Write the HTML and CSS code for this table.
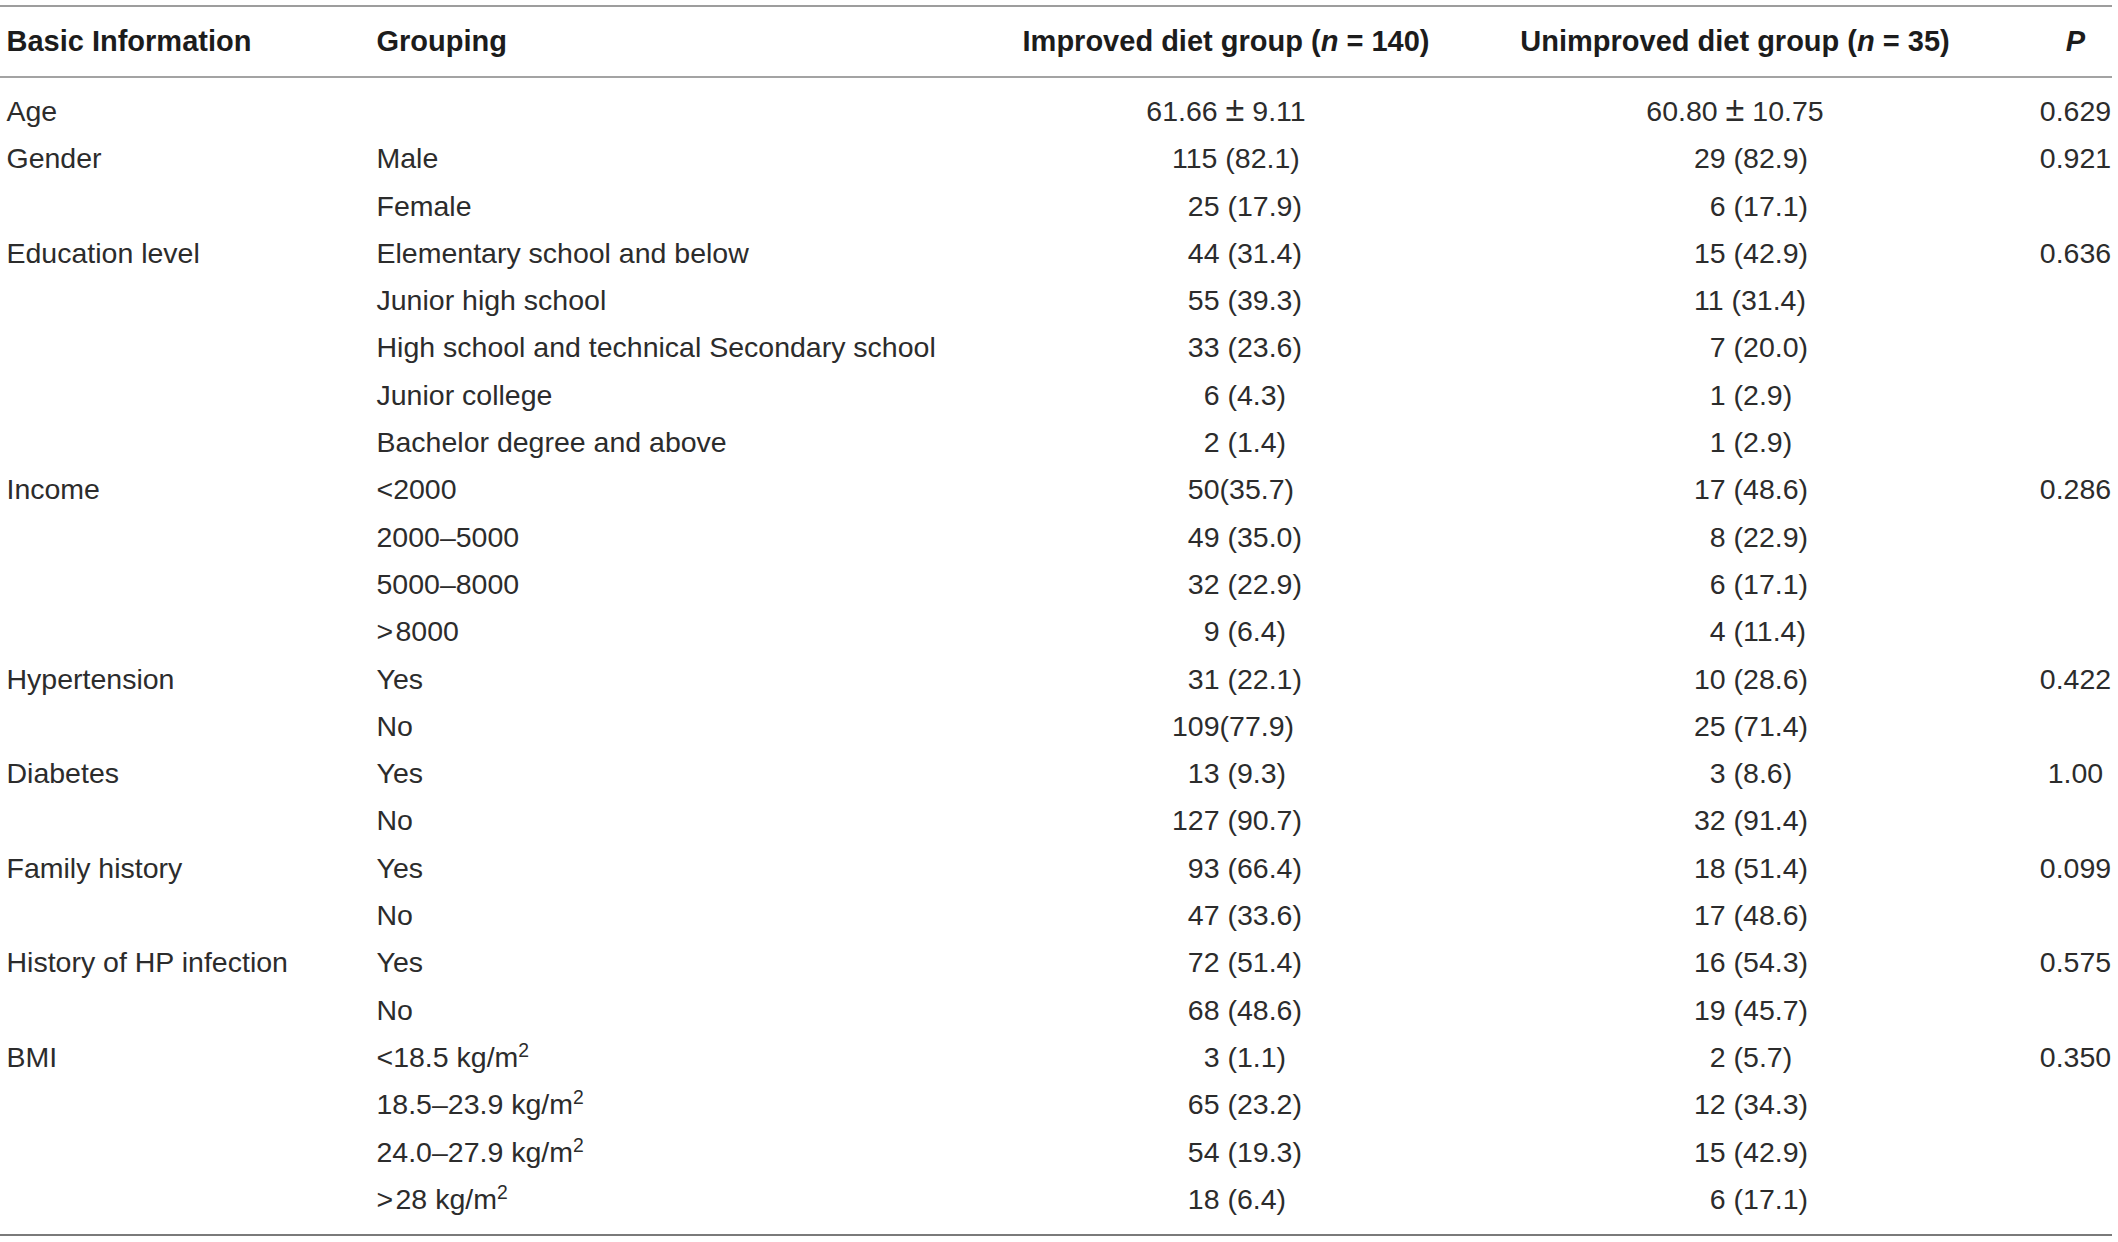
FILE: index.html
```html
<!DOCTYPE html>
<html lang="en">
<head>
<meta charset="utf-8">
<title>Basic information of patients</title>
<link rel="stylesheet" href="styles.css">
</head>
<body>
<div class="page">
<table class="tbl">
  <colgroup>
    <col class="w1"><col class="w2"><col class="w3"><col class="w4"><col class="w5">
  </colgroup>
  <thead>
    <tr>
      <th class="c1">Basic Information</th>
      <th class="c2">Grouping</th>
      <th class="ctr">Improved diet group (<i>n</i> = 140)</th>
      <th class="ctr">Unimproved diet group (<i>n</i> = 35)</th>
      <th class="cp"><i>P</i></th>
    </tr>
  </thead>
  <tbody>
    <tr><td class="c1">Age</td><td class="c2"></td><td class="ctr">61.66 <span class="pm">±</span> 9.11</td><td class="ctr">60.80 <span class="pm">±</span> 10.75</td><td class="cp">0.629</td></tr>
    <tr><td class="c1">Gender</td><td class="c2">Male</td><td class="a3">115 (82.1)</td><td class="b2">29 (82.9)</td><td class="cp">0.921</td></tr>
    <tr><td class="c1"></td><td class="c2">Female</td><td class="a2">25 (17.9)</td><td class="b1">6 (17.1)</td><td class="cp"></td></tr>
    <tr><td class="c1">Education level</td><td class="c2">Elementary school and below</td><td class="a2">44 (31.4)</td><td class="b2">15 (42.9)</td><td class="cp">0.636</td></tr>
    <tr><td class="c1"></td><td class="c2">Junior high school</td><td class="a2">55 (39.3)</td><td class="b2">11 (31.4)</td><td class="cp"></td></tr>
    <tr><td class="c1"></td><td class="c2">High school and technical Secondary school</td><td class="a2">33 (23.6)</td><td class="b1">7 (20.0)</td><td class="cp"></td></tr>
    <tr><td class="c1"></td><td class="c2">Junior college</td><td class="a1">6 (4.3)</td><td class="b1">1 (2.9)</td><td class="cp"></td></tr>
    <tr><td class="c1"></td><td class="c2">Bachelor degree and above</td><td class="a1">2 (1.4)</td><td class="b1">1 (2.9)</td><td class="cp"></td></tr>
    <tr><td class="c1">Income</td><td class="c2">&lt;2000</td><td class="a2">50(35.7)</td><td class="b2">17 (48.6)</td><td class="cp">0.286</td></tr>
    <tr><td class="c1"></td><td class="c2">2000–5000</td><td class="a2">49 (35.0)</td><td class="b1">8 (22.9)</td><td class="cp"></td></tr>
    <tr><td class="c1"></td><td class="c2">5000–8000</td><td class="a2">32 (22.9)</td><td class="b1">6 (17.1)</td><td class="cp"></td></tr>
    <tr><td class="c1"></td><td class="c2">&gt;&#8202;8000</td><td class="a1">9 (6.4)</td><td class="b1">4 (11.4)</td><td class="cp"></td></tr>
    <tr><td class="c1">Hypertension</td><td class="c2">Yes</td><td class="a2">31 (22.1)</td><td class="b2">10 (28.6)</td><td class="cp">0.422</td></tr>
    <tr><td class="c1"></td><td class="c2">No</td><td class="a3">109(77.9)</td><td class="b2">25 (71.4)</td><td class="cp"></td></tr>
    <tr><td class="c1">Diabetes</td><td class="c2">Yes</td><td class="a2">13 (9.3)</td><td class="b1">3 (8.6)</td><td class="cp">1.00</td></tr>
    <tr><td class="c1"></td><td class="c2">No</td><td class="a3">127 (90.7)</td><td class="b2">32 (91.4)</td><td class="cp"></td></tr>
    <tr><td class="c1">Family history</td><td class="c2">Yes</td><td class="a2">93 (66.4)</td><td class="b2">18 (51.4)</td><td class="cp">0.099</td></tr>
    <tr><td class="c1"></td><td class="c2">No</td><td class="a2">47 (33.6)</td><td class="b2">17 (48.6)</td><td class="cp"></td></tr>
    <tr><td class="c1">History of HP infection</td><td class="c2">Yes</td><td class="a2">72 (51.4)</td><td class="b2">16 (54.3)</td><td class="cp">0.575</td></tr>
    <tr><td class="c1"></td><td class="c2">No</td><td class="a2">68 (48.6)</td><td class="b2">19 (45.7)</td><td class="cp"></td></tr>
    <tr><td class="c1">BMI</td><td class="c2">&lt;18.5 kg/m<sup>2</sup></td><td class="a1">3 (1.1)</td><td class="b1">2 (5.7)</td><td class="cp">0.350</td></tr>
    <tr><td class="c1"></td><td class="c2">18.5–23.9 kg/m<sup>2</sup></td><td class="a2">65 (23.2)</td><td class="b2">12 (34.3)</td><td class="cp"></td></tr>
    <tr><td class="c1"></td><td class="c2">24.0–27.9 kg/m<sup>2</sup></td><td class="a2">54 (19.3)</td><td class="b2">15 (42.9)</td><td class="cp"></td></tr>
    <tr><td class="c1"></td><td class="c2">&gt;&#8202;28 kg/m<sup>2</sup></td><td class="a2">18 (6.4)</td><td class="b1">6 (17.1)</td><td class="cp"></td></tr>
  </tbody>
</table>
</div>
</body>
</html>
```

FILE: styles.css
```css
html, body {
  margin: 0;
  padding: 0;
  background: #ffffff;
}

body {
  font-family: "Liberation Sans", Arial, Helvetica, sans-serif;
  color: #2c2c2c;
}

.page {
  padding-top: 5px;
  width: 2112px;
}

.tbl {
  width: 2112px;
  table-layout: fixed;
  border-collapse: separate;
  border-spacing: 0;
}

.w1 { width: 370px; }
.w2 { width: 630px; }
.w3 { width: 452px; }
.w4 { width: 566px; }
.w5 { width: 94px; }

.tbl th {
  font-size: 29px;
  font-weight: bold;
  color: #1c1c1c;
  height: 69px;
  line-height: 69px;
  padding: 0;
  white-space: nowrap;
  text-align: left;
  border-top: 2px solid #9d9d9d;
  border-bottom: 2px solid #a3a3a3;
}

.tbl td {
  font-size: 28.5px;
  line-height: 47.3px;
  padding: 0;
  white-space: nowrap;
  text-align: left;
}

.tbl tbody tr:first-child td {
  padding-top: 10px;
}

.tbl tbody tr:last-child td {
  padding-bottom: 11px;
  border-bottom: 2px solid #7a7a7a;
}

.tbl .c1 { padding-left: 6.5px; }
.tbl .c2 { padding-left: 6.5px; }
.tbl .ctr { text-align: center; }
.tbl .cp { text-align: center; padding-left: 21px; }

.tbl .a3 { padding-left: 172px; }
.tbl .a2 { padding-left: calc(172px + 1ch); }
.tbl .a1 { padding-left: calc(172px + 2ch); }

.tbl .b2 { padding-left: 242px; }
.tbl .b1 { padding-left: calc(242px + 1ch); }

.pm {
  font-size: 1.2em;
  line-height: 0;
}

sup {
  font-size: 0.68em;
  line-height: 0;
  vertical-align: 0.5em;
}
```
